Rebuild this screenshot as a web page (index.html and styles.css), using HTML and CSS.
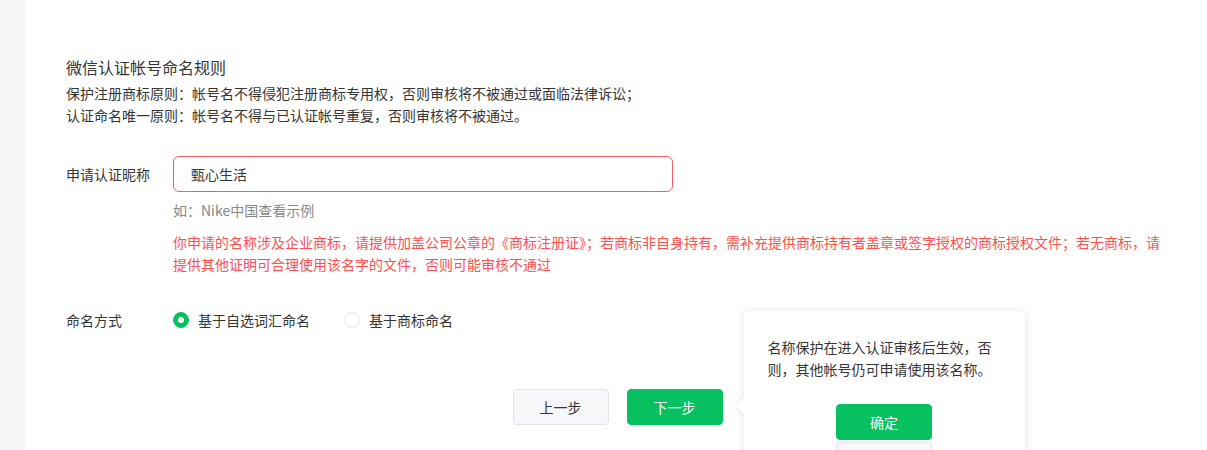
FILE: index.html
```html
<!DOCTYPE html>
<html lang="zh-CN">
<head>
<meta charset="utf-8">
<title>微信认证</title>
<link rel="stylesheet" href="styles.css">
</head>
<body>
<div class="page">
  <aside class="side"></aside>
  <main class="main">
    <section class="rules">
      <h2 class="rules-title">微信认证帐号命名规则</h2>
      <p class="rules-line">保护注册商标原则：帐号名不得侵犯注册商标专用权，否则审核将不被通过或面临法律诉讼；</p>
      <p class="rules-line">认证命名唯一原则：帐号名不得与已认证帐号重复，否则审核将不被通过。</p>
    </section>

    <div class="form-row row-name">
      <label class="form-label">申请认证昵称</label>
      <div class="form-field">
        <div class="input input-error">甄心生活</div>
        <p class="hint">如：Nike中国<span class="hint-link">查看示例</span></p>
        <p class="error">你申请的名称涉及企业商标，请提供加盖公司公章的《商标注册证》；若商标非自身持有，需补充提供商标持有者盖章或签字授权的商标授权文件；若无商标，请提供其他证明可合理使用该名字的文件，否则可能审核不通过</p>
      </div>
    </div>

    <div class="form-row row-mode">
      <label class="form-label">命名方式</label>
      <div class="form-field radios">
        <span class="radio-option"><span class="radio radio-on"></span>基于自选词汇命名</span>
        <span class="radio-option"><span class="radio"></span>基于商标命名</span>
      </div>
    </div>

    <div class="actions">
      <button class="btn btn-default">上一步</button>
      <div class="btn-wrap">
        <button class="btn btn-primary">下一步</button>
        <div class="popover">
          <span class="popover-arrow"></span>
          <p class="popover-text">名称保护在进入认证审核后生效，否则，其他帐号仍可申请使用该名称。</p>
          <div class="popover-actions">
            <button class="btn btn-primary">确定</button>
            <button class="btn btn-default">取消</button>
          </div>
        </div>
      </div>
    </div>
  </main>
</div>
</body>
</html>
```

FILE: styles.css
```css
* { box-sizing: border-box; }
html, body {
  margin: 0;
  padding: 0;
  height: 450px;
  overflow: hidden;
  background: #fff;
}
body {
  font-family: "Noto Sans CJK SC", "Noto Sans", "Liberation Sans", sans-serif;
  font-size: 14px;
  color: #353535;
}
.page {
  display: flex;
  height: 450px;
}
.side {
  width: 25px;
  flex: none;
  background: #f4f5f7;
}
.main {
  flex: 1;
  padding: 55px 34px 0 41px;
}
.rules-title {
  margin: 0 0 3px;
  font-size: 16px;
  font-weight: normal;
  line-height: 24px;
  color: #353535;
}
.rules-line {
  margin: 0;
  line-height: 22px;
}
.form-row {
  display: flex;
}
.row-name { margin-top: 30px; }
.form-label {
  width: 107px;
  flex: none;
  line-height: 36px;
}
.form-field {
  flex: 1;
}
.input {
  width: 500px;
  height: 36px;
  line-height: 34px;
  padding: 0 17px;
  border: 1px solid #f45b62;
  border-radius: 6px;
  color: #353535;
}
.hint {
  margin: 7px 0 0;
  line-height: 22px;
  color: #888;
}
.error {
  margin: 10px 0 0;
  line-height: 22px;
  color: #fa5151;
}
.row-mode { margin-top: 27px; }
.radios {
  display: flex;
  align-items: center;
  gap: 34px;
  height: 36px;
}
.radio-option {
  display: flex;
  align-items: center;
  gap: 9px;
}
.radio {
  width: 16px;
  height: 16px;
  border-radius: 50%;
  border: 1px solid #e8e8e8;
  background: #fff;
  position: relative;
}
.radio-on {
  border-color: #07c160;
  background: #07c160;
}
.radio-on::after {
  content: "";
  position: absolute;
  left: 50%;
  top: 50%;
  width: 6px;
  height: 6px;
  margin: -3px 0 0 -3px;
  border-radius: 50%;
  background: #fff;
}
.actions {
  display: flex;
  justify-content: center;
  gap: 18px;
  margin-top: 51px;
  padding-right: 4px;
}
.btn {
  width: 96px;
  height: 36px;
  border-radius: 4px;
  font-family: inherit;
  font-size: 14px;
  padding: 0;
  cursor: pointer;
}
.btn-default {
  background: #f6f7f9;
  border: 1px solid #e2e4e7;
  color: #353535;
}
.btn-primary {
  background: #07c160;
  border: 1px solid #07c160;
  color: #fff;
}
.btn-wrap {
  position: relative;
}
.popover {
  position: absolute;
  left: 117px;
  top: -78px;
  width: 281px;
  padding: 25px 24px 24px;
  background: #fff;
  border-radius: 4px;
  box-shadow: 0 1px 10px rgba(0, 0, 0, 0.12);
}
.popover-arrow {
  position: absolute;
  left: -6px;
  top: 89px;
  width: 12px;
  height: 12px;
  background: #fff;
  transform: rotate(45deg);
  box-shadow: -2px 2px 4px rgba(0, 0, 0, 0.05);
}
.popover-text {
  position: relative;
  margin: 0;
  width: 228px;
  line-height: 22px;
  color: #353535;
}
.popover-actions {
  margin-top: 24px;
  display: flex;
  flex-direction: column;
  align-items: center;
  gap: 2px;
}
```
